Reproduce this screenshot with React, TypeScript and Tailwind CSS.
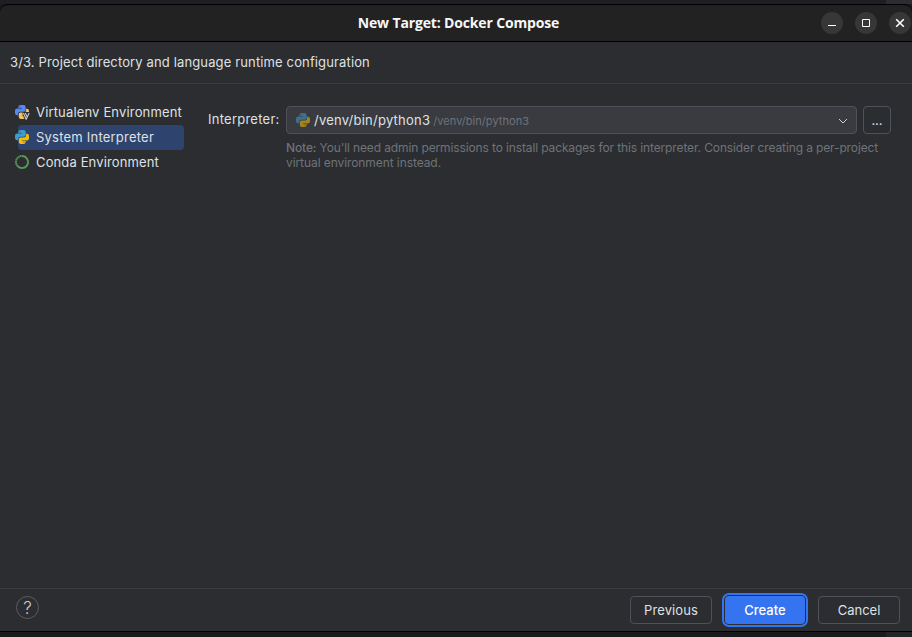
import type { ReactNode } from "react";

function PythonIcon({ blue, yellow, className = "" }: { blue: string; yellow: string; className?: string }) {
  return (
    <svg viewBox="0 0 14 14" className={`size-3.5 shrink-0 ${className}`}>
      <path
        fill={blue}
        d="M5.5 0H8.5A2.2 2.2 0 0 1 10.7 2.2V5A1.8 1.8 0 0 1 8.9 6.8H5.2A2 2 0 0 0 3.2 8.8V10.3H2.2A2.2 2.2 0 0 1 0 8.1V5.8A2.2 2.2 0 0 1 2.2 3.6H7V3H3.3V2.2A2.2 2.2 0 0 1 5.5 0ZM5 1.4A0.5 0.5 0 1 0 5 2.4A0.5 0.5 0 1 0 5 1.4Z"
      />
      <path
        fill={yellow}
        d="M8.5 14H5.5A2.2 2.2 0 0 1 3.8 11.8V9.2A1.8 1.8 0 0 1 5.6 7.4H9.1A2 2 0 0 0 11.1 5.4V3.7H11.8A2.2 2.2 0 0 1 14 5.9V8.2A2.2 2.2 0 0 1 11.8 10.4H7V11H10.7V11.8A2.2 2.2 0 0 1 8.5 14ZM9 12.6A0.5 0.5 0 1 0 9 11.6A0.5 0.5 0 1 0 9 12.6Z"
      />
    </svg>
  );
}

function VirtualenvIcon() {
  return (
    <span className="relative flex size-3.5 shrink-0">
      <PythonIcon blue="#548af7" yellow="#f2c55c" />
      <svg viewBox="0 0 8 8" className="absolute top-[7px] left-[7px] size-2" fill="none">
        <path d="M0.5 0H8V4L6 8H3L0.5 2Z" fill="#2b2d30" />
        <path d="M1.4 1L4.2 7.2L7.2 1M3.4 1L4.9 4.6" stroke="#ced0d6" strokeWidth="1.1" />
      </svg>
    </span>
  );
}

function CondaIcon() {
  return (
    <svg viewBox="0 0 14 14" className="size-3.5 shrink-0" fill="none" stroke="#57965c">
      <path d="M7 1A6 6 0 1 1 2.76 11.24" strokeWidth="1.9" />
      <path d="M2.76 11.24A6 6 0 0 1 7 1" strokeWidth="2" strokeDasharray="1.6 0.4" />
    </svg>
  );
}

function WindowButton({ children }: { children: ReactNode }) {
  return (
    <button className="flex size-[22px] items-center justify-center rounded-full bg-[#373737]">
      <svg viewBox="0 0 10 10" className="size-2.5" fill="none" stroke="#ffffff">
        {children}
      </svg>
    </button>
  );
}

export default function App() {
  return (
    <div className="flex h-[637px] w-[912px] flex-col overflow-hidden bg-[#1a1a1c] font-['Inter',sans-serif] text-[13px] leading-4 text-[#dfe1e5]">
      <div className="flex h-1 shrink-0 justify-end bg-[#1e1f22]">
        <div className="w-[26px] bg-[#2b2d30]" />
      </div>
      <header className="flex h-[38px] shrink-0 items-center rounded-t-lg border-y border-black bg-[#222222]">
        <div className="w-[96px]" />
        <h1 className="flex-1 text-center font-['Open_Sans',sans-serif] text-[14px] font-bold tracking-[-0.15px] whitespace-nowrap text-[#f7f7f7]">
          New Target: Docker Compose
        </h1>
        <div className="flex w-[91px] shrink-0 gap-3">
          <WindowButton>
            <path d="M1 7.5H9" />
          </WindowButton>
          <WindowButton>
            <path d="M1.5 1.5H8.5V8.5H1.5Z" />
          </WindowButton>
          <WindowButton>
            <path d="M1.2 1.2L8.8 8.8M8.8 1.2L1.2 8.8" strokeWidth="1.6" />
          </WindowButton>
        </div>
      </header>

      <div className="flex h-[42px] shrink-0 items-center border-b border-[#3b3d41] bg-[#2b2d30] pb-0.5 pl-2.5">
        <span className="tracking-[0.135px]">3/3. Project directory and language runtime configuration</span>
      </div>

      <main className="flex min-h-0 flex-auto basis-[504px] bg-[#2b2d30]">
        <nav className="w-[184px] shrink-0 pt-4">
          <div className="flex h-[25px] items-center gap-[7px] pb-0.5 pl-[15px]">
            <VirtualenvIcon />
            <span className="tracking-[0.16px]">Virtualenv Environment</span>
          </div>
          <div className="ml-[18px] flex h-[25px] items-center gap-[7px] rounded-[4px] bg-[#2e436e] pb-0.5">
            <PythonIcon className="-ml-[3px]" blue="#3f9bcb" yellow="#f5bd08" />
            <span className="tracking-[0.22px]">System Interpreter</span>
          </div>
          <div className="flex h-[25px] items-center gap-[7px] pb-0.5 pl-[15px]">
            <CondaIcon />
            <span className="tracking-[0.13px]">Conda Environment</span>
          </div>
        </nav>
        <section className="flex flex-1 pt-[22px] pl-6">
          <div className="w-[78px] shrink-0 pt-[5px] tracking-[0.25px]">Interpreter:</div>
          <div className="flex-1">
            <div className="flex gap-1.5">
              <div className="flex h-7 w-[571px] items-center rounded-[4px] border border-[#4e5157] bg-[#393b40] pr-2 pl-[9px]">
                <PythonIcon blue="#3c708c" yellow="#a18320" />
                <span className="ml-1 tracking-[0.24px]">/venv/bin/python3</span>
                <span className="ml-[3px] pt-px text-[11px] tracking-[0.05px] text-[#6f737a]">/venv/bin/python3</span>
                <svg viewBox="0 0 10 6" className="mt-0.5 ml-auto h-1.5 w-2.5" fill="none" stroke="#ced0d6">
                  <path d="M1 1L5 5L9 1" />
                </svg>
              </div>
              <button className="flex size-7 items-center justify-center rounded-[4px] border border-[#4e5157]">...</button>
            </div>
            <p className="mt-1.5 text-[12px] leading-[15px] tracking-[-0.125px] whitespace-nowrap text-[#6f737a]">
              <span className="font-medium">Note:</span> You'll need admin permissions to install packages for this interpreter. Consider creating a per-project
              <br />
              <span className="tracking-[-0.08px]">virtual environment instead.</span>
            </p>
          </div>
        </section>
      </main>

      <footer className="flex h-[44px] shrink-0 items-start border-t border-b border-t-[#3b3d41] border-b-black bg-[#2b2d30] pt-[7px] pr-3 pl-4">
        <button className="flex size-[23px] items-center justify-center rounded-full border border-[#5a5d63] text-[17px] font-light text-[#ced0d6]">
          ?
        </button>
        <div className="ml-auto flex gap-[13px]">
          <button className="h-7 w-[82px] rounded-[4px] border border-[#4e5157] tracking-[0.1px]">Previous</button>
          <button className="h-7 w-[80px] rounded-[4px] bg-[#3574f0] font-medium text-white outline-2 outline-offset-1 outline-[#3574f0]">
            Create
          </button>
          <button className="h-7 w-[82px] rounded-[4px] border border-[#4e5157]">Cancel</button>
        </div>
      </footer>
      <div className="flex h-[5px] shrink-0 justify-end">
        <div className="w-[26px] bg-[#232427]" />
      </div>
    </div>
  );
}
